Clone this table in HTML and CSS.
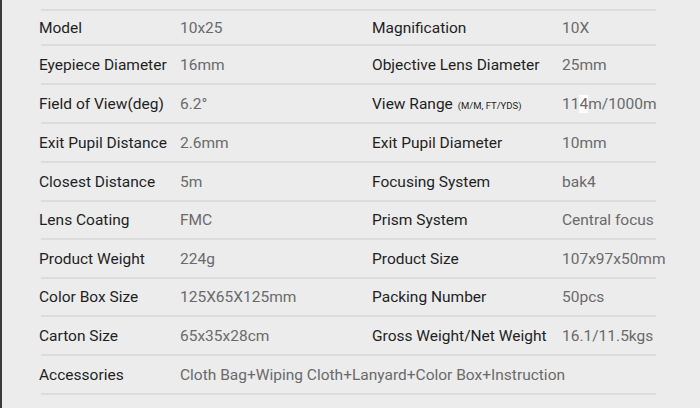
FILE: index.html
```html
<!DOCTYPE html>
<html>
<head>
<meta charset="utf-8">
<link rel="stylesheet" href="styles.css">
</head>
<body>
<div class="edge"></div>
<div class="specs">
  <div class="row first">
    <div class="label">Model</div><div class="value">10x25</div>
    <div class="label">Magnification</div><div class="value">10X</div>
  </div>
  <div class="row">
    <div class="label">Eyepiece Diameter</div><div class="value">16mm</div>
    <div class="label">Objective Lens Diameter</div><div class="value">25mm</div>
  </div>
  <div class="row">
    <div class="label">Field of View(deg)</div><div class="value">6.2°</div>
    <div class="label">View Range <small>(M/M, FT/YDS)</small></div><div class="value">11<span class="hl">4</span>m/1000m</div>
  </div>
  <div class="row">
    <div class="label">Exit Pupil Distance</div><div class="value">2.6mm</div>
    <div class="label">Exit Pupil Diameter</div><div class="value">10mm</div>
  </div>
  <div class="row">
    <div class="label">Closest Distance</div><div class="value">5m</div>
    <div class="label">Focusing System</div><div class="value">bak4</div>
  </div>
  <div class="row short">
    <div class="label">Lens Coating</div><div class="value">FMC</div>
    <div class="label">Prism System</div><div class="value">Central focus</div>
  </div>
  <div class="row">
    <div class="label">Product Weight</div><div class="value">224g</div>
    <div class="label">Product Size</div><div class="value">107x97x50mm</div>
  </div>
  <div class="row short">
    <div class="label">Color Box Size</div><div class="value">125X65X125mm</div>
    <div class="label">Packing Number</div><div class="value">50pcs</div>
  </div>
  <div class="row">
    <div class="label">Carton Size</div><div class="value">65x35x28cm</div>
    <div class="label">Gross Weight/Net Weight</div><div class="value">16.1/11.5kgs</div>
  </div>
  <div class="row last">
    <div class="label">Accessories</div><div class="value wide">Cloth Bag+Wiping Cloth+Lanyard+Color Box+Instruction</div>
  </div>
</div>
</body>
</html>
```
FILE: styles.css
```css
html, body {
  margin: 0;
  padding: 0;
}
body {
  width: 700px;
  height: 408px;
  overflow: hidden;
  background: #ececec;
  display: flex;
  font-family: Roboto, "Liberation Sans", Arial, sans-serif;
  font-size: 15.5px;
}
.edge {
  width: 2px;
  height: 408px;
  background: #3a3a3a;
  flex: none;
}
.specs {
  margin-left: 39px;
  padding-top: 9px;
  width: 615px;
  display: flex;
  flex-direction: column;
}
.row {
  display: grid;
  grid-template-columns: 139px 194px 188px 1fr;
  align-items: center;
  height: 37px;
  border-top: 2px solid #dcdcdc;
}
.row.first { height: 33px; }
.row.short { height: 36px; }
.row.last { border-bottom: 2px solid #dcdcdc; }
.label {
  color: #1f1f1f;
  margin-left: -2px;
  white-space: nowrap;
}
.label small {
  font-size: 9.5px;
  margin-left: 1px;
}
.value {
  color: #6a6a6a;
  white-space: nowrap;
}
.value.wide {
  grid-column: 2 / 5;
}
.hl {
  background: #ffffff;
}
```
